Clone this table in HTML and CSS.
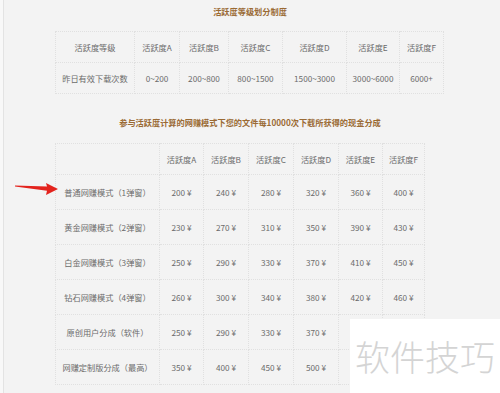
FILE: index.html
```html
<!DOCTYPE html>
<html lang="zh-CN">
<head>
<meta charset="utf-8">
<title>活跃度等级划分制度</title>
<link rel="stylesheet" href="styles.css">
</head>
<body>
<div class="page">
  <div class="content">
    <h2 class="title title-first">活跃度等级划分制度</h2>
    <table class="grid grid-levels">
      <colgroup>
        <col style="width:79px"><col style="width:45px"><col style="width:49px"><col style="width:54px"><col style="width:64px"><col style="width:53px"><col style="width:44px">
      </colgroup>
      <tr><td>活跃度等级</td><td>活跃度A</td><td>活跃度B</td><td>活跃度C</td><td>活跃度D</td><td>活跃度E</td><td>活跃度F</td></tr>
      <tr><td>昨日有效下载次数</td><td>0~200</td><td>200~800</td><td>800~1500</td><td>1500~3000</td><td>3000~6000</td><td>6000+</td></tr>
    </table>

    <h2 class="title title-second">参与活跃度计算的网赚模式下您的文件每10000次下载所获得的现金分成</h2>
    <table class="grid grid-money">
      <colgroup>
        <col style="width:104px"><col style="width:44px"><col style="width:45px"><col style="width:45px"><col style="width:45px"><col style="width:44px"><col style="width:42px">
      </colgroup>
      <tr class="head"><td></td><td>活跃度A</td><td>活跃度B</td><td>活跃度C</td><td>活跃度D</td><td>活跃度E</td><td>活跃度F</td></tr>
      <tr><td>普通网赚模式（1弹窗）</td><td>200 ¥</td><td>240 ¥</td><td>280 ¥</td><td>320 ¥</td><td>360 ¥</td><td>400 ¥</td></tr>
      <tr><td>黄金网赚模式（2弹窗）</td><td>230 ¥</td><td>270 ¥</td><td>310 ¥</td><td>350 ¥</td><td>390 ¥</td><td>430 ¥</td></tr>
      <tr><td>白金网赚模式（3弹窗）</td><td>250 ¥</td><td>290 ¥</td><td>330 ¥</td><td>370 ¥</td><td>410 ¥</td><td>450 ¥</td></tr>
      <tr><td>钻石网赚模式（4弹窗）</td><td>260 ¥</td><td>300 ¥</td><td>340 ¥</td><td>380 ¥</td><td>420 ¥</td><td>460 ¥</td></tr>
      <tr><td>原创用户分成（软件）</td><td>250 ¥</td><td>290 ¥</td><td>330 ¥</td><td>370 ¥</td><td>410 ¥</td><td></td></tr>
      <tr><td>网赚定制版分成（最高）</td><td>350 ¥</td><td>400 ¥</td><td>450 ¥</td><td>500 ¥</td><td>550 ¥</td><td></td></tr>
    </table>
  </div>

  <svg class="arrow" width="44" height="14" viewBox="0 0 44 14" aria-hidden="true">
    <polygon points="0,2.6 32,3.6 31,0 43,6 31,12 32,7.8 0,3.6" fill="#e3231d"/>
  </svg>

  <div class="watermark">软件技巧</div>
</div>
</body>
</html>
```
FILE: styles.css
```css
html, body {
  margin: 0;
  padding: 0;
  background: #f8f8f8;
}

.page {
  position: relative;
  width: 500px;
  height: 393px;
  overflow: hidden;
  font-family: "Noto Sans CJK SC", "Noto Sans", sans-serif;
}

.content {
  margin-left: 3px;
  height: 393px;
  border-left: 1px solid #e3e3e3;
  background: #f3f3f3;
  padding-top: 5px;
  box-sizing: border-box;
}

.title {
  margin: 0;
  font-size: 8.2px;
  line-height: 12px;
  font-weight: bold;
  color: #9a6a33;
  text-align: center;
  padding-right: 4px;
}

.title-first {
  margin-bottom: 14px;
}

.title-second {
  margin-top: 22px;
  margin-bottom: 15px;
}

.grid {
  border-collapse: collapse;
  table-layout: fixed;
  margin-left: 51px;
}

.grid-levels { width: 388px; }
.grid-money { width: 369px; }

.grid td {
  border: 1px dotted #e0e0e0;
  padding: 0;
  text-align: center;
  vertical-align: middle;
  font-size: 8.2px;
  color: #6b6b6b;
  white-space: nowrap;
}

.grid-levels td { height: 30px; }
.grid-money td { height: 34px; }
.grid-money .head td { height: 30px; }

.arrow {
  position: absolute;
  left: 15px;
  top: 183px;
}

.watermark {
  position: absolute;
  left: 350px;
  top: 319px;
  width: 150px;
  height: 74px;
  background: #ffffff;
  color: #d4d4d4;
  font-size: 35px;
  font-weight: 300;
  line-height: 74px;
  padding-left: 5px;
  box-sizing: border-box;
  white-space: nowrap;
}
```
